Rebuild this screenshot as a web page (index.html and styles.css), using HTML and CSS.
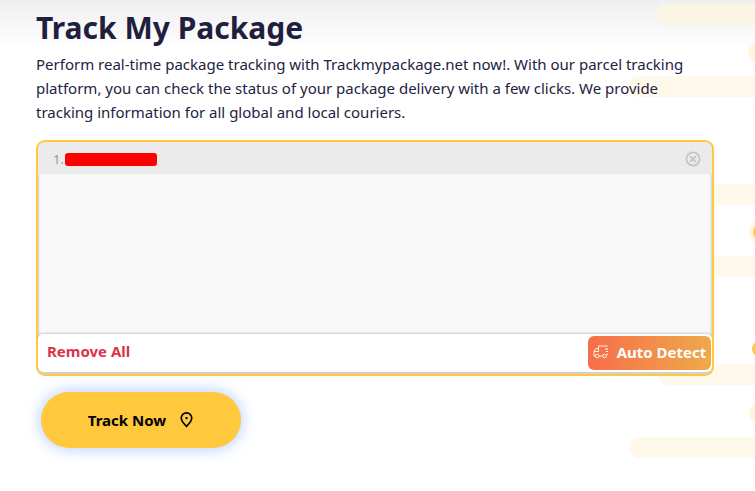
FILE: index.html
```html
<!DOCTYPE html>
<html lang="en">
<head>
<meta charset="utf-8">
<title>Track My Package</title>
<link rel="stylesheet" href="styles.css">
</head>
<body>
<div class="deco" aria-hidden="true">
  <span class="pill p1"></span>
  <span class="pill p2"></span>
  <span class="pill p3"></span>
  <span class="pill p4"></span>
  <span class="pill p5"></span>
  <span class="pill p6"></span>
  <span class="dot d1"></span>
  <span class="dot d2"></span>
  <span class="dot d3"></span>
  <span class="dot d4"></span>
</div>
<main class="content">
  <h1 class="title">Track My Package</h1>
  <p class="intro">Perform real-time package tracking with Trackmypackage.net now!. With our parcel tracking platform, you can check the status of your package delivery with a few clicks. We provide tracking information for all global and local couriers.</p>
  <section class="tracker">
    <div class="list">
      <div class="row">
        <span class="num">1.</span>
        <span class="redact"></span>
        <svg class="clear" viewBox="0 0 16 16" width="16" height="16"><circle cx="8" cy="8" r="6.6" fill="none" stroke="#c4c4c4" stroke-width="1.7"/><path d="M5.6 5.600l4.800 4.800M10.400 5.600l-4.800 4.800" stroke="#c4c4c4" stroke-width="1.800" stroke-linecap="round"/></svg>
      </div>
    </div>
    <div class="bar">
      <span class="remove">Remove All</span>
      <span class="auto">
        <svg viewBox="0 0 16 14" width="16" height="14" fill="none" stroke="#fff" stroke-width="0.9"><path d="M14.500 1H5.500v2.500H3L1 6.500V11h1.300M6 11h3.600M5.500 3.500v3H1"/><circle cx="4.200" cy="11" r="1.800"/><circle cx="11.500" cy="11" r="1.800"/><path d="M12 4h3M13 6.500h2M13.500 9.500h1.500" stroke-width="1.100"/></svg>
        Auto Detect
      </span>
    </div>
  </section>
  <button class="track" type="button">
    Track Now
    <svg viewBox="0 0 16 18" width="15" height="17" fill="none" stroke="#000" stroke-width="1.700"><path d="M8 16.300C5 13.500 2.400 11 2.400 7.500a5.600 5.600 0 0 1 11.200 0C13.600 11 11 13.500 8 16.300z"/><circle cx="8" cy="7.500" r="1.300" fill="#000" stroke="none"/></svg>
  </button>
</main>
</body>
</html>
```
FILE: styles.css
```css
* { box-sizing: border-box; }
html, body { height: 100%; }
body {
  margin: 0;
  overflow: hidden;
  position: relative;
  background: linear-gradient(#efefef 0, #fff 50px);
  font-family: "Noto Sans", sans-serif;
}
.deco { position: absolute; inset: 0; overflow: hidden; }
.pill { position: absolute; height: 21px; right: -30px; border-radius: 11px; background: #fff9ec; }
.p1 { top: 4px; left: 656px; background: #fbf5e6; }
.p2 { top: 76px; left: 628px; }
.p3 { top: 184px; left: 700px; }
.p4 { top: 256px; left: 700px; }
.p5 { top: 364px; left: 657px; }
.p6 { top: 437px; left: 629px; }
.dot { position: absolute; border-radius: 50%; }
.d1 { top: 43px; left: 748px; width: 20px; height: 20px; background: #fff5dc; }
.d2 { top: 224px; left: 753px; width: 16px; height: 16px; background: #ffc83d; box-shadow: 0 0 0 4px #fff5dc; }
.d3 { top: 341px; left: 752px; width: 16px; height: 16px; background: #ffc83d; }
.d4 { top: 403px; left: 749px; width: 20px; height: 20px; background: #fff5dc; }
.content { position: relative; width: 678px; margin-left: 36px; }
.title { margin: 0; padding-top: 7px; font-size: 30px; line-height: 42px; font-weight: 700; color: #211f3d; }
.intro { margin: 3px 0 15px; font-size: 15px; line-height: 24.200px; color: #23233f; }
.tracker {
  height: 236px;
  border: 2px solid #ffc83d;
  border-radius: 9px;
  overflow: hidden;
  background: #f9f9f9;
  display: flex;
  flex-direction: column;
  box-shadow: inset 0 0 3px #aaa;
}
.list { flex: 1; }
.row { height: 32px; background: #ebebeb; display: flex; align-items: center; padding: 3px 11px 0 15px; font-size: 13px; color: #999; }
.redact { width: 92px; height: 13px; border-radius: 3px; margin-left: 1px; background: #f00; }
.clear { margin-left: auto; }
.bar {
  height: 38px;
  margin-bottom: 2px;
  background: #fff;
  border-radius: 5px;
  box-shadow: 0 0 3px #999;
  display: flex;
  align-items: center;
  justify-content: space-between;
  padding: 0 1px 0 9px;
}
.remove { margin-bottom: 3px; font-size: 15px; font-weight: 700; color: #dc3249; }
.auto {
  height: 34px;
  width: 123px;
  padding-bottom: 2px;
  border-radius: 6px;
  background: linear-gradient(90deg, #f76e4a, #efa94a);
  color: #fff;
  font-size: 15px;
  font-weight: 700;
  display: flex;
  align-items: center;
  justify-content: center;
  gap: 8px;
  white-space: nowrap;
}
.track {
  display: flex;
  align-items: center;
  justify-content: center;
  gap: 13px;
  width: 200px;
  height: 56px;
  margin: 16px 0 0 5px;
  border: 0;
  border-radius: 28px;
  background: #ffc83d;
  box-shadow: 0 0 16px #a9c8ff;
  font-family: inherit;
  font-size: 15px;
  font-weight: 700;
  color: #000;
}
```
